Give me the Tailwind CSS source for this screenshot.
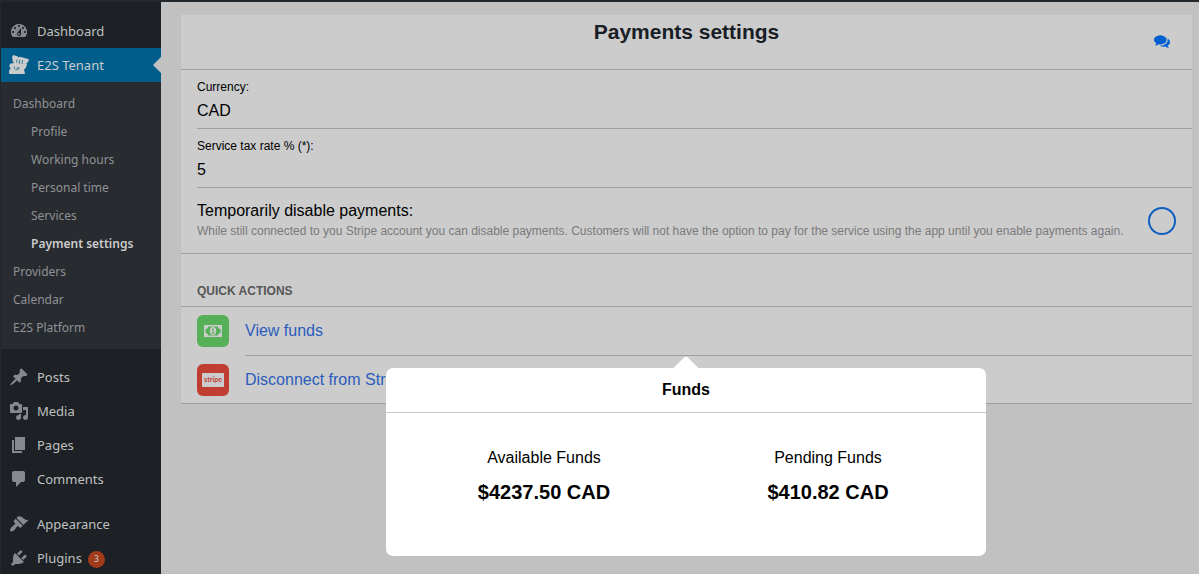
<!DOCTYPE html>
<html lang="en">
<head>
<meta charset="utf-8">
<meta name="viewport" content="width=device-width, initial-scale=1">
<title>Payments settings</title>
<script src="https://cdn.jsdelivr.net/npm/@tailwindcss/browser@4"></script>
</head>
<body class="flex h-screen flex-col overflow-hidden bg-[#c1c1c1] font-['Liberation_Sans',Arial,sans-serif] text-base text-black">
<header class="h-[2px] shrink-0 bg-[#23282d]"></header>
<div class="flex min-h-0 flex-1">
  <nav aria-label="Main menu" class="w-[161px] shrink-0 overflow-hidden border-l border-[#23282d] bg-[#1d2024] pt-3 font-['Noto_Sans',sans-serif] text-[13px] text-[#bfc0c1]">
    <ul>
      <li><a href="#" class="flex h-[34px] items-center gap-2 pl-2"><svg class="size-5 fill-[#85888c]" viewBox="0 0 20 20"><path d="M3.76 16h12.48A7.998 7.998 0 0 0 10 3a7.998 7.998 0 0 0-6.24 13zM10 4c.55 0 1 .45 1 1s-.45 1-1 1-1-.45-1-1 .45-1 1-1zM6 6c.55 0 1 .45 1 1s-.45 1-1 1-1-.45-1-1 .45-1 1-1zm8 0c.55 0 1 .45 1 1s-.45 1-1 1-1-.45-1-1 .45-1 1-1zM4 10c.55 0 1 .45 1 1s-.45 1-1 1-1-.45-1-1 .45-1 1-1zm12 0c.55 0 1 .45 1 1s-.45 1-1 1-1-.45-1-1 .45-1 1-1z"/><path d="M12 7l-3.370 4.550A2 2 0 1 0 12 13z" fill="#1d2024"/><circle cx="10" cy="13" r="1"/></svg><span class="pt-0.5">Dashboard</span></a></li>
      <li>
        <a href="#" class="relative flex h-[34px] items-center gap-2 bg-[#005d8c] pl-2 text-[#cccccc]"><svg class="size-5" viewBox="0 0 20 20"><path fill="#ccc" d="M4 0l4.500 1.200.8 1.300 1.600-.7L20 4.300l-1 3-1.500.6.4 1.800-1 3.300-1.500.8-.2 1.500.8 3.700H1l-1-.8.300-3.400 1.500-1L.3 11.500l.7-2.700 4-.8-1.700-2.200.5-1.700-.9-1z"/><path d="M8 4.500l-.5 3M11 4.500l-1 4.500M13.500 5L13 9M5 11.500l1 3M9 12l-2 3.500M10 12l-.5 3" fill="none" stroke="#3b7c9e"/></svg><span class="pt-0.5">E2S Tenant</span><span class="absolute right-0 top-[9px] border-y-8 border-r-8 border-y-transparent border-r-[#c1c1c1]"></span></a>
        <ul class="bg-[#282b30] pb-[7px] pt-2 text-xs text-[#8f9295]">
          <li><a href="#" class="flex h-7 items-center pl-3">Dashboard</a></li>
          <li><a href="#" class="flex h-7 items-center pl-[30px]">Profile</a></li>
          <li><a href="#" class="flex h-7 items-center pl-[30px]">Working hours</a></li>
          <li><a href="#" class="flex h-7 items-center pl-[30px]">Personal time</a></li>
          <li><a href="#" class="flex h-7 items-center pl-[30px]">Services</a></li>
          <li><a href="#" aria-current="page" class="flex h-7 items-center pl-[30px] font-semibold text-[#cccccc]">Payment settings</a></li>
          <li><a href="#" class="flex h-7 items-center pl-3">Providers</a></li>
          <li><a href="#" class="flex h-7 items-center pl-3">Calendar</a></li>
          <li><a href="#" class="flex h-7 items-center pl-3">E2S Platform</a></li>
        </ul>
      </li>
    </ul>
    <ul class="mt-[11px]">
      <li><a href="#" class="flex h-[34px] items-center gap-2 pl-2"><svg class="size-5 fill-[#85888c]" viewBox="0 0 20 20"><path d="M10.44 3.02l1.82-1.82 6.36 6.35-1.83 1.82c-1.05-.68-2.48-.57-3.41.36l-.75.75c-.92.93-1.04 2.35-.35 3.41l-1.83 1.82-2.41-2.41-2.8 2.79c-.42.42-3.38 2.71-3.8 2.29s1.86-3.39 2.28-3.81l2.79-2.79L4.1 9.36l1.83-1.82c1.05.69 2.48.57 3.4-.36l.75-.75c.93-.92 1.05-2.35.36-3.41z"/></svg><span class="pt-0.5">Posts</span></a></li>
      <li><a href="#" class="flex h-[34px] items-center gap-2 pl-2"><svg class="size-5 fill-[#85888c]" viewBox="0 0 20 20"><path d="M13 11V4c0-.55-.45-1-1-1h-1.67L9 1H5L3.67 3H2c-.55 0-1 .45-1 1v7c0 .55.45 1 1 1h10c.55 0 1-.45 1-1zM7 4.5c1.38 0 2.5 1.12 2.5 2.5S8.38 9.5 7 9.5 4.5 8.38 4.5 7 5.62 4.5 7 4.5zM14 6h5v10.5c0 1.38-1.12 2.5-2.5 2.5S14 17.88 14 16.5s1.12-2.5 2.5-2.5c.17 0 .34.02.5.05V9h-3V6zm-4 8.05V13h2v3.5c0 1.38-1.12 2.5-2.5 2.5S7 17.88 7 16.5 8.12 14 9.5 14c.17 0 .34.02.5.05z"/></svg><span class="pt-0.5">Media</span></a></li>
      <li><a href="#" class="flex h-[34px] items-center gap-2 pl-2"><svg class="size-5 fill-[#85888c]" viewBox="0 0 20 20"><path d="M6 15V2h10v13H6zm-1 1h8v2H3V5h2v11z"/></svg><span class="pt-0.5">Pages</span></a></li>
      <li><a href="#" class="flex h-[34px] items-center gap-2 pl-2"><svg class="size-5 fill-[#85888c]" viewBox="0 0 20 20"><path d="M5 2h9c1.1 0 2 .9 2 2v7c0 1.1-.9 2-2 2h-2l-5 5v-5H5c-1.1 0-2-.9-2-2V4c0-1.1.9-2 2-2z"/></svg><span class="pt-0.5">Comments</span></a></li>
    </ul>
    <ul class="mt-[11px]">
      <li><a href="#" class="flex h-[34px] items-center gap-2 pl-2"><svg class="size-5 fill-[#85888c]" viewBox="0 0 20 20"><path d="M14.48 11.06L7.41 3.99l1.5-1.5c.5-.56 2.3-.47 3.51.32 1.21.8 1.43 1.28 2.91 2.1 1.18.64 2.45 1.26 4.45.85zm-.71.71L6.7 4.7 4.93 6.47c-.39.39-.39 1.02 0 1.41l1.06 1.06c.39.39.39 1.03 0 1.42-.6.6-1.43 1.11-2.21 1.69-.35.26-.7.53-1.01.84C1.43 14.23.4 16.08 1.4 17.07c.99 1 2.84-.03 4.18-1.36.31-.31.58-.66.85-1.02.57-.78 1.08-1.61 1.69-2.21.39-.39 1.02-.39 1.41 0l1.06 1.06c.39.39 1.02.39 1.41 0z"/></svg><span class="pt-0.5">Appearance</span></a></li>
      <li><a href="#" class="flex h-[34px] items-center gap-2 pl-2"><svg class="size-5 fill-[#85888c]" viewBox="0 0 20 20"><path d="M13.11 4.36L9.87 7.6 8 5.73l3.24-3.24c.35-.34 1.05-.2 1.56.32.52.51.66 1.21.31 1.55zm-8 1.77l.91-1.12 9.01 9.01-1.19.84c-.71.71-2.63 1.16-3.82 1.16H6.14L4.9 17.26c-.59.59-1.54.59-2.12 0-.59-.58-.59-1.53 0-2.12l1.24-1.24v-3.88c0-1.13.4-3.19 1.09-3.89zm7.26 3.97l3.24-3.24c.34-.35 1.04-.21 1.55.31.52.51.66 1.21.31 1.55l-3.24 3.25z"/></svg><span class="flex items-center gap-[6px] pt-0.5">Plugins<span class="flex size-[17px] items-center justify-center rounded-full bg-[#a23b19] text-[9px] text-[#cccccc]">3</span></span></a></li>
    </ul>
  </nav>

  <main class="min-w-0 flex-1 pl-5 pr-[7px] pt-[13px]">
    <div class="relative">
      <section class="border-b border-[#a0a0a0] bg-[#cccccc]">
        <div class="flex h-[55px] border-b border-[#a0a0a0]">
          <div class="w-14"></div>
          <h1 class="flex-1 pt-1 text-center text-[21px] font-bold leading-[26px] text-[#191d25]">Payments settings</h1>
          <button type="button" aria-label="Messages" class="flex w-14 items-center justify-center pb-0.5 pr-1"><svg class="size-4 fill-[#0060d0]" viewBox="0 0 1792 1792"><path d="M1408 768q0 139-94 257t-256.500 186.500-353.500 68.500q-86 0-176-16-124 88-278 128-36 9-86 16h-3q-11 0-20.500-8t-11.500-21q-1-3-1-6.500t.5-6.500 2-6l2.500-5 3.500-5.500 4-5 4.500-5 4-4.500q5-6 23-25t26-29.500 22.500-29 25-38.500 20.500-44q-124-72-195-177t-71-224q0-139 94-257t256.500-186.500 353.500-68.500 353.500 68.500 256.500 186.500 94 257zm384 256q0 120-71 224.500t-195 176.500q10 24 20.500 44t25 38.500 22.500 29 26 29.500 23 25q1 1 4 4.500t4.500 5 4 5 3.500 5.500l2.500 5 2 6 .5 6.500-1 6.500q-3 14-13 22t-22 7q-50-7-86-16-154-40-278-128-90 16-176 16-271 0-472-132 58 4 88 4 161 0 309-45t264-129q125-92 192-212t67-254q0-77-23-152 129 71 204 178t75 230z"/></svg></button>
        </div>
        <form>
          <div class="pl-4">
            <div class="h-[59px] border-b border-[#a0a0a0] pt-2">
              <label for="currency" class="block text-xs leading-[18px]">Currency:</label>
              <input id="currency" type="text" value="CAD" class="block h-[30px] w-full bg-transparent outline-none">
            </div>
            <div class="h-[59px] border-b border-[#a0a0a0] pt-2">
              <label for="tax" class="block text-xs leading-[18px]">Service tax rate % (*):</label>
              <input id="tax" type="text" value="5" class="block h-[30px] w-full bg-transparent outline-none">
            </div>
          </div>
          <div class="flex h-[66px] items-center gap-4 border-b border-[#a0a0a0] px-4">
            <div class="min-w-0 flex-1">
              <label for="disable" class="block leading-5">Temporarily disable payments:</label>
              <p id="disable-help" class="whitespace-nowrap text-xs leading-5 text-[#7a7a7a]">While still connected to you Stripe account you can disable payments. Customers will not have the option to pay for the service using the app until you enable payments again.</p>
            </div>
            <input id="disable" type="checkbox" aria-describedby="disable-help" class="size-7 shrink-0 appearance-none rounded-full border-2 border-[#0f5fc0]">
          </div>
        </form>
        <h2 class="flex h-[53px] items-end border-b border-[#a0a0a0] px-4 pb-[6px] text-xs font-bold leading-[18px] text-[#575757]">QUICK ACTIONS</h2>
        <ul class="pl-4 text-[#2a5cbd]">
          <li class="flex gap-4"><svg class="mt-2 size-8" viewBox="0 0 32 32"><rect width="32" height="32" rx="6" fill="#56b058"/><rect x="7" y="10" width="18" height="12" fill="#ccc"/><path fill="#56b058" d="M11 11.500h10a2.500 2.500 0 0 0 2.500 2.500v4a2.500 2.500 0 0 0-2.500 2.500H11A2.500 2.500 0 0 0 8.500 18v-4a2.500 2.500 0 0 0 2.500-2.500z"/><ellipse cx="16" cy="16" rx="3.200" ry="4" fill="#ccc"/><path d="M14.800 14.500l1.300-.8v4.300m-1.500 0h3" fill="none" stroke="#56b058"/></svg><a href="#" class="flex h-[49px] flex-1 items-center border-b border-[#a0a0a0]">View funds</a></li>
          <li class="flex gap-4"><svg class="mt-2 size-8" viewBox="0 0 32 32"><rect width="32" height="32" rx="6" fill="#bf3d31"/><rect x="5" y="9" width="22" height="14" rx="1" fill="#ccc"/><text x="16" y="18" text-anchor="middle" font-family="Lato, sans-serif" font-size="7" font-weight="700" fill="#bf3d31">stripe</text></svg><a href="#" class="flex h-[47px] flex-1 items-center">Disconnect from Stripe</a></li>
        </ul>
      </section>

      <div class="absolute inset-x-0 top-[353px] flex justify-center pr-px">
        <div role="dialog" aria-labelledby="funds" class="relative w-[600px]">
          <div class="absolute -top-[11px] left-1/2 h-[11px] w-[26px] -translate-x-1/2 overflow-hidden pt-1"><div class="size-[26px] rotate-45 rounded-[3px] bg-white"></div></div>
          <div class="rounded-[7px] bg-white pb-[49px]">
            <h2 id="funds" class="h-[45px] border-b border-[#c8c8c8] text-center font-bold leading-[44px]">Funds</h2>
            <dl class="grid grid-cols-2 px-4 pt-[33px] text-center">
              <div><dt class="leading-6">Available Funds</dt><dd class="pt-2 text-xl font-bold leading-[29px]">$4237.50 CAD</dd></div>
              <div><dt class="leading-6">Pending Funds</dt><dd class="pt-2 text-xl font-bold leading-[29px]">$410.82 CAD</dd></div>
            </dl>
          </div>
        </div>
      </div>
    </div>
  </main>
</div>
</body>
</html>
